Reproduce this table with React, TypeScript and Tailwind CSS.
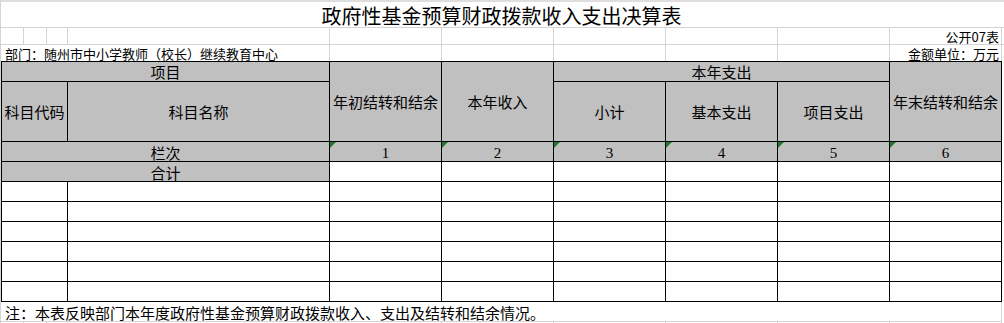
const grid = 'border-r border-[#d4d4d4]';
const head = 'bg-[#c0c0c0] flex items-center justify-center text-[15px] leading-none';
const cols = ['1', '2', '3', '4', '5', '6'];

function Flag() {
  return (
    <span className="absolute top-0 left-0 w-0 h-0 border-t-[6px] border-t-[#1f7a2e] border-r-[6px] border-r-transparent" />
  );
}

export default function App() {
  return (
    <div className="w-[1004px] h-[323px] overflow-hidden bg-white border-l border-[#d4d4d4] text-black font-['Noto_Sans_CJK_SC','Noto_Sans',sans-serif] flex flex-col">
      <div className="h-[2px] shrink-0 bg-[#dedede]" />

      <div className="h-[26px] shrink-0 border-b border-[#d4d4d4] flex items-center justify-center text-[20px] leading-none pt-[2px] pr-[2px]">
        政府性基金预算财政拨款收入支出决算表
      </div>

      <div className="h-[17px] shrink-0 border-b border-[#d4d4d4] flex">
        <div className={`w-[23px] ${grid}`} />
        <div className={`w-[23px] ${grid}`} />
        <div className={`w-[21px] ${grid}`} />
        <div className={`w-[262px] ${grid}`} />
        <div className={`w-[112px] ${grid}`} />
        <div className={`w-[112px] ${grid}`} />
        <div className={`w-[112px] ${grid}`} />
        <div className={`w-[112px] ${grid}`} />
        <div className={`w-[112px] ${grid}`} />
        <div className={`w-[112px] ${grid} flex items-center justify-end pr-[2px] text-[13px] leading-none`}>
          公开07表
        </div>
      </div>

      <div className="h-[16px] shrink-0 flex">
        <div className={`w-[329px] ${grid} flex items-center pl-[4px] text-[13px] leading-none whitespace-nowrap`}>
          部门：随州市中小学教师（校长）继续教育中心
        </div>
        <div className={`w-[112px] ${grid}`} />
        <div className={`w-[112px] ${grid}`} />
        <div className={`w-[112px] ${grid}`} />
        <div className={`w-[112px] ${grid}`} />
        <div className={`w-[112px] ${grid}`} />
        <div className={`w-[112px] ${grid} flex items-center justify-end pr-[2px] text-[13px] leading-none whitespace-nowrap`}>
          金额单位：万元
        </div>
      </div>

      <div className="w-fit shrink-0 grid grid-cols-[65px_261px_repeat(6,111px)] grid-rows-[19px_59px_repeat(8,19px)] gap-px p-px bg-black">
        <div className={`${head} col-span-2`}>项目</div>
        <div className={`${head} row-span-2`}>年初结转和结余</div>
        <div className={`${head} row-span-2`}>本年收入</div>
        <div className={`${head} col-span-3`}>本年支出</div>
        <div className={`${head} row-span-2`}>年末结转和结余</div>
        <div className={head}>科目代码</div>
        <div className={head}>科目名称</div>
        <div className={head}>小计</div>
        <div className={head}>基本支出</div>
        <div className={head}>项目支出</div>

        <div className={`${head} col-span-2 pt-[2px]`}>栏次</div>
        {cols.map((c) => (
          <div key={c} className={`${head} relative pt-[3px] font-['Liberation_Serif',serif]`}>
            <Flag />
            {c}
          </div>
        ))}

        <div className={`${head} col-span-2 pt-[2px]`}>合计</div>
        {cols.map((c) => (
          <div key={c} className="bg-white" />
        ))}

        {Array.from({ length: 48 }).map((_, i) => (
          <div key={i} className="bg-white" />
        ))}
      </div>

      <div className="h-[20px] shrink-0 w-[1001px] border-b border-r border-[#d4d4d4] flex items-center pl-[4px] pt-[1px] text-[15px] leading-none whitespace-nowrap">
        注：本表反映部门本年度政府性基金预算财政拨款收入、支出及结转和结余情况。
      </div>

      <div className="flex-1 flex">
        <div className={`w-[23px] ${grid}`} />
        <div className={`w-[23px] ${grid}`} />
        <div className={`w-[21px] ${grid}`} />
        <div className={`w-[262px] ${grid}`} />
        <div className={`w-[112px] ${grid}`} />
        <div className={`w-[112px] ${grid}`} />
        <div className={`w-[112px] ${grid}`} />
        <div className={`w-[112px] ${grid}`} />
        <div className={`w-[112px] ${grid}`} />
        <div className={`w-[112px] ${grid}`} />
      </div>
    </div>
  );
}
